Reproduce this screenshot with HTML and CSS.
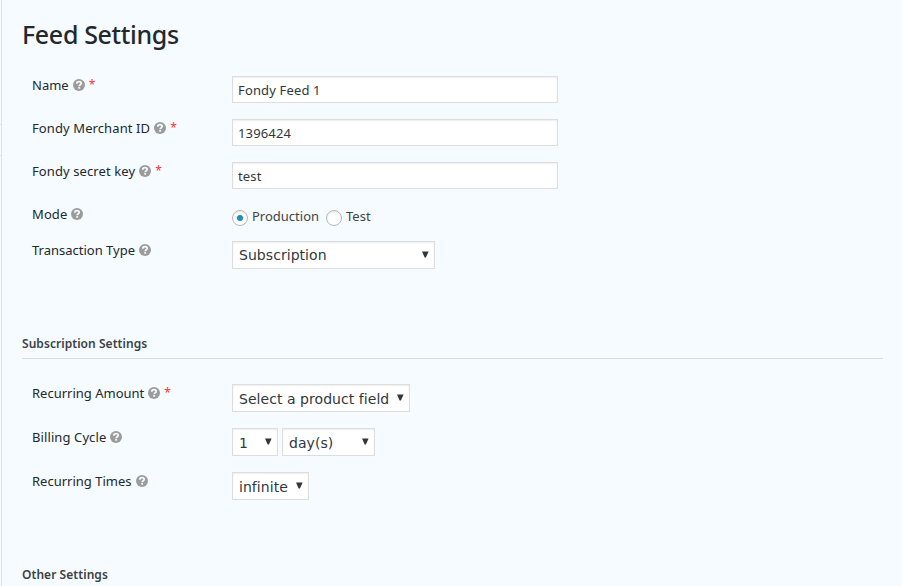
FILE: index.html
```
<!DOCTYPE html>
<html lang="en">
<head>
<meta charset="utf-8">
<title>Feed Settings</title>
<link rel="stylesheet" href="styles.css">
</head>
<body>
<svg class="defs" aria-hidden="true">
  <symbol id="help" viewBox="0 0 12 12">
    <circle cx="6" cy="6" r="6" fill="#9b9b9b"/>
    <path d="M3.8 4.7C3.8 3.4 4.7 2.7 6 2.7s2.2.7 2.2 1.8C8.2 5.8 6.2 5.8 6.2 7.3" fill="none" stroke="#f5fbfe" stroke-width="1.7"/>
    <rect x="5.2" y="8.1" width="1.9" height="1.6" fill="#f5fbfe"/>
  </symbol>
  <symbol id="arrow" viewBox="0 0 7 7">
    <path d="M0 .5h6.6L3.9 6.5H2.7z" fill="#32373c"/>
  </symbol>
</svg>
<aside class="rail"><div class="rail-tab"></div></aside>
<main class="panel">
  <h1 class="title">Feed Settings</h1>
  <section class="fields">
    <div class="row">
      <div class="label"><span>Name</span><svg class="help"><use href="#help"/></svg><span class="req">*</span></div>
      <input class="input" type="text" value="Fondy Feed 1">
    </div>
    <div class="row">
      <div class="label wide"><span>Fondy Merchant ID</span><svg class="help"><use href="#help"/></svg><span class="req">*</span></div>
      <input class="input" type="text" value="1396424">
    </div>
    <div class="row">
      <div class="label wide"><span>Fondy secret key</span><svg class="help"><use href="#help"/></svg><span class="req">*</span></div>
      <input class="input" type="text" value="test">
    </div>
    <div class="row row-mode">
      <div class="label wide"><span>Mode</span><svg class="help"><use href="#help"/></svg></div>
      <div class="radios">
        <span class="radio checked"></span><span class="radio-label production">Production</span>
        <span class="radio"></span><span class="radio-label">Test</span>
      </div>
    </div>
    <div class="row">
      <div class="label"><span>Transaction Type</span><svg class="help"><use href="#help"/></svg></div>
      <div class="select type"><span>Subscription</span><svg class="arrow"><use href="#arrow"/></svg></div>
    </div>
  </section>
  <h4 class="section-title">Subscription Settings</h4>
  <section class="fields subscription">
    <div class="row">
      <div class="label"><span>Recurring Amount</span><svg class="help"><use href="#help"/></svg><span class="req">*</span></div>
      <div class="select amount"><span>Select a product field</span><svg class="arrow"><use href="#arrow"/></svg></div>
    </div>
    <div class="row">
      <div class="label wide"><span>Billing Cycle</span><svg class="help"><use href="#help"/></svg></div>
      <div class="group">
        <div class="select count"><span>1</span><svg class="arrow"><use href="#arrow"/></svg></div>
        <div class="select unit"><span>day(s)</span><svg class="arrow"><use href="#arrow"/></svg></div>
      </div>
    </div>
    <div class="row">
      <div class="label"><span>Recurring Times</span><svg class="help"><use href="#help"/></svg></div>
      <div class="select times"><span>infinite</span><svg class="arrow"><use href="#arrow"/></svg></div>
    </div>
  </section>
  <h4 class="section-title">Other Settings</h4>
</main>
</body>
</html>
```
FILE: styles.css
```
* { box-sizing: border-box; }
body {
  margin: 0;
  height: 586px;
  overflow: hidden;
  display: flex;
  background: #f5fbfe;
  color: #23282d;
  font: 13px/18px "Noto Sans", "Open Sans", sans-serif;
}
.defs { position: absolute; width: 0; height: 0; }
.rail {
  width: 2px;
  border-right: 1px solid #dfe1e3;
  padding-top: 124px;
}
.rail-tab {
  height: 32px;
  border-top: 1px solid #dfe1e3;
  border-bottom: 1px solid #dfe1e3;
}
.panel {
  flex: 1;
  padding: 18px 19px 0 20px;
}
.title {
  margin: 0;
  height: 58px;
  font-size: 25px;
  line-height: 33px;
  font-weight: 500;
  letter-spacing: -.34px;
}
.fields { padding-left: 10px; height: 252px; }
.row {
  display: grid;
  grid-template-columns: 200px 1fr;
  align-items: start;
  height: 43px;
}
.row-mode { height: 36px; }
.label { display: flex; align-items: center; height: 18px; white-space: nowrap; }
.wide { letter-spacing: .1px; }
.help { width: 12px; height: 12px; margin-left: 4px; }
.req { color: #f33; margin-left: 4px; font-size: 12px; }
.input {
  width: 326px;
  height: 27px;
  margin: 0;
  padding: 0 5px;
  border: 1px solid #ddd;
  border-radius: 0;
  background: #fff;
  box-shadow: inset 0 1px 2px rgba(0, 0, 0, .07);
  color: #32373c;
  font: inherit;
  letter-spacing: .15px;
  outline: 0;
}
.radios { display: flex; align-items: center; padding-top: 4px; color: #444; }
.radio {
  width: 16px;
  height: 16px;
  margin: 1px 4px 0 0;
  border: 1px solid #b4b9be;
  border-radius: 50%;
  background: #fff;
  box-shadow: inset 0 1px 2px rgba(0, 0, 0, .1);
}
.checked { display: grid; place-items: center; }
.checked::before {
  content: "";
  width: 6px;
  height: 6px;
  border-radius: 50%;
  background: #1e8cbe;
}
.radio-label { line-height: 16px; margin-top: -4px; }
.production { width: 74px; }
.select {
  display: flex;
  justify-content: space-between;
  align-items: center;
  height: 28px;
  padding: 0 5px 0 6px;
  border: 1px solid #ddd;
  background: #fff;
  box-shadow: inset 0 1px 2px rgba(0, 0, 0, .07);
  color: #32373c;
  font: 14px/26px "DejaVu Sans", sans-serif;
  letter-spacing: .05px;
  white-space: nowrap;
}
.arrow { width: 7px; height: 7px; flex: none; margin-top: -2px; }
.group { display: flex; gap: 4px; }
.type { width: 203px; }
.amount { width: 178px; }
.count { width: 46px; }
.unit { width: 93px; }
.times { width: 77px; }
.section-title {
  margin: 0;
  height: 31px;
  padding-top: 7px;
  border-bottom: 1px solid #ddd;
  color: #3c4146;
  font-size: 12px;
  line-height: 18px;
  font-weight: 600;
  letter-spacing: .05px;
}
.subscription { margin-top: 25px; height: 175px; }
.subscription .row { height: 44px; }
.subscription .select span { padding-top: 2px; }
```
